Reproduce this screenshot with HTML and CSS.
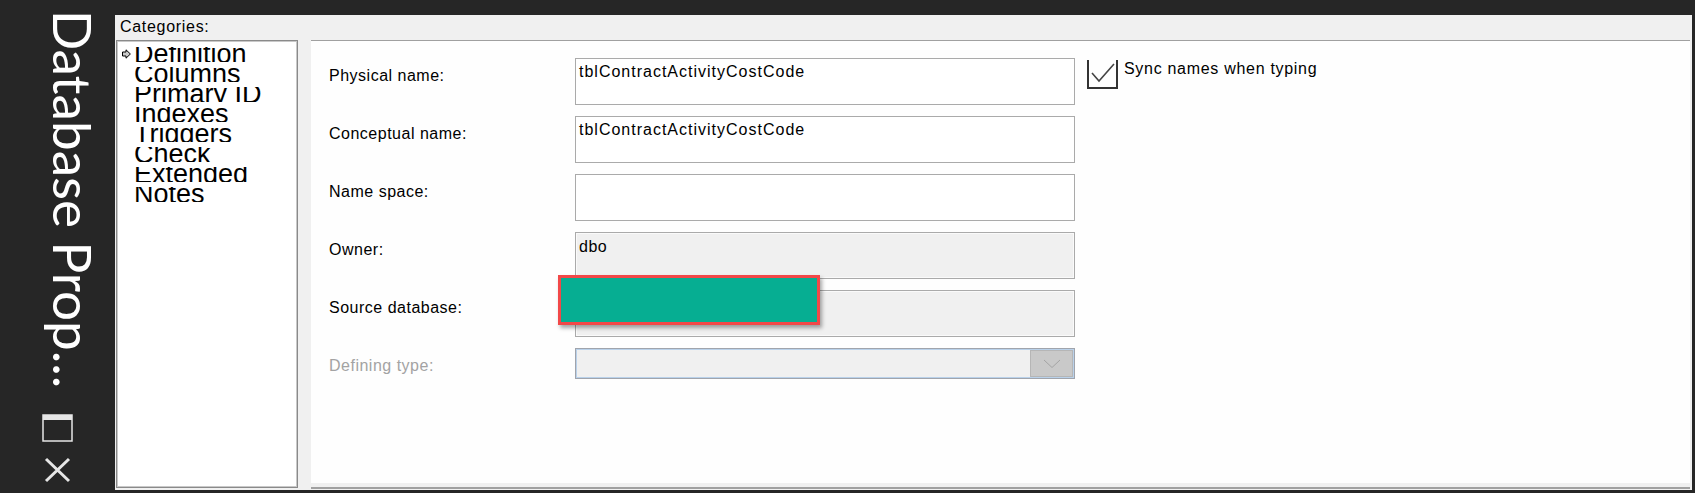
FILE: index.html
```html
<!DOCTYPE html>
<html lang="en">
<head>
    <meta charset="UTF-8">
    <meta name="viewport" content="width=device-width, initial-scale=1.0">
    <title>Database Properties</title>
    <link rel="stylesheet" href="styles.css">
</head>
<body>
    <div class="window">
        <!-- Docked title bar -->
        <div class="titlebar">
            <div class="title">Database Prop...</div>
            <div class="controls">
                <svg class="ctrl-max" width="31" height="28" viewBox="0 0 31 28">
                    <rect x="1" y="1" width="29" height="26" fill="none" stroke="#e6e6e6" stroke-width="1.5"/>
                    <rect x="1" y="1" width="29" height="5" fill="#e6e6e6"/>
                </svg>
                <svg class="ctrl-close" width="27" height="26" viewBox="0 0 27 26">
                    <path d="M2 2 L25 24 M25 2 L2 24" stroke="#e6e6e6" stroke-width="3" fill="none"/>
                </svg>
            </div>
        </div>

        <!-- Dialog -->
        <div class="dialog">
            <div class="cat-label">Categories:</div>
            <div class="dialog-body">
                <ul class="category-list">
                    <li><span class="marker">
                        <svg width="9" height="10" viewBox="0 0 9 10">
                            <path d="M0.5 3 H4 V0.8 L8.4 5 L4 9.2 V7 H0.5 Z" fill="#c8c8c8" stroke="#000" stroke-width="1"/>
                        </svg>
                    </span>Definition</li>
                    <li><span class="marker"></span>Columns</li>
                    <li><span class="marker"></span>Primary ID</li>
                    <li><span class="marker"></span>Indexes</li>
                    <li><span class="marker"></span>Triggers</li>
                    <li><span class="marker"></span>Check</li>
                    <li><span class="marker"></span>Extended</li>
                    <li><span class="marker"></span>Notes</li>
                </ul>

                <div class="form-wrap">
                    <div class="form-panel">
                        <div class="form-grid">
                            <div class="label">Physical name:</div>
                            <div class="field">tblContractActivityCostCode</div>
                            <div class="sync">
                                <span class="checkbox">
                                    <svg width="27" height="27" viewBox="0 0 27 27">
                                        <path d="M3 13 L10 21 L25 4" fill="none" stroke="#444" stroke-width="1.6"/>
                                    </svg>
                                </span>
                                <span class="sync-text">Sync names when typing</span>
                            </div>

                            <div class="label">Conceptual name:</div>
                            <div class="field">tblContractActivityCostCode</div>
                            <div></div>

                            <div class="label">Name space:</div>
                            <div class="field"></div>
                            <div></div>

                            <div class="label">Owner:</div>
                            <div class="field readonly">dbo</div>
                            <div></div>

                            <div class="label">Source database:</div>
                            <div class="field readonly"></div>
                            <div></div>

                            <div class="label disabled">Defining type:</div>
                            <div class="combo">
                                <span class="combo-value"></span>
                                <span class="combo-button">
                                    <svg width="18" height="10" viewBox="0 0 18 10">
                                        <path d="M1 1 L9 8.5 L17 1" fill="none" stroke="#a4a4a4" stroke-width="1"/>
                                    </svg>
                                </span>
                            </div>
                            <div></div>
                        </div>
                    </div>
                </div>
            </div>
        </div>

        <!-- Redaction box over the source database field -->
        <div class="redact"></div>
    </div>
</body>
</html>
```

FILE: styles.css
```css
* {
    box-sizing: border-box;
    margin: 0;
    padding: 0;
}

body {
    background-color: #262626;
    font-family: "Liberation Sans", Arial, sans-serif;
    overflow: hidden;
}

.window {
    position: relative;
    display: flex;
    width: 1695px;
    height: 493px;
    background-color: #262626;
}

/* Title bar */
.titlebar {
    width: 115px;
    flex-shrink: 0;
    display: flex;
    flex-direction: column;
    align-items: center;
}

.title {
    writing-mode: vertical-rl;
    font-family: Lato, "Open Sans", sans-serif;
    font-size: 53px;
    line-height: 60px;
    color: #ffffff;
    margin-top: 10px;
    margin-left: 30px;
    height: 390px;
    white-space: nowrap;
}

.controls {
    display: flex;
    flex-direction: column;
    align-items: center;
    gap: 15px;
    margin-top: 14px;
}

/* Dialog */
.dialog {
    width: 1577px;
    height: 475px;
    margin-top: 15px;
    background-color: #f0f0f0;
}

.cat-label {
    height: 25px;
    padding-left: 5px;
    font-size: 16px;
    letter-spacing: 0.7px;
    line-height: 24px;
    color: #000;
}

.dialog-body {
    display: flex;
    gap: 13px;
    padding-left: 1px;
}

.category-list {
    list-style: none;
    width: 182px;
    height: 448px;
    background-color: #ffffff;
    border: 1px solid #8a8a8a;
    box-shadow: inset 0 0 0 1px #c8c8c8;
    padding: 6px 0 0 5px;
}

.category-list li {
    display: flex;
    height: 15px;
    margin-bottom: 5px;
    overflow: hidden;
    font-size: 27px;
    line-height: 15px;
    color: #000;
}

.marker {
    width: 12px;
    flex-shrink: 0;
    display: flex;
    align-items: flex-start;
    padding-top: 2px;
}

.form-wrap {
    width: 1379px;
    height: 449px;
    padding-bottom: 4px;
    border-bottom: 2px solid #a0a0a0;
}

.form-panel {
    height: 100%;
    background-color: #fefefe;
    border-top: 1px solid #a0a0a0;
    padding: 17px 0 0 18px;
}

.form-grid {
    display: grid;
    grid-template-columns: 234px 500px auto;
    grid-auto-rows: 47px;
    column-gap: 12px;
    row-gap: 11px;
}

.form-grid > :nth-last-child(-n+3) {
    height: 31px;
}

.label {
    font-size: 16px;
    letter-spacing: 0.5px;
    line-height: 20px;
    padding-top: 8px;
    color: #000;
}

.label.disabled {
    color: #a3a3a3;
}

.field {
    border: 1px solid #aaaaaa;
    background-color: #ffffff;
    font-size: 16px;
    letter-spacing: 1px;
    line-height: 18px;
    padding: 4px 3px 0;
    color: #000;
}

.field.readonly {
    background-color: #f0f0f0;
    box-shadow: inset 0 0 0 1px #fafafa;
    padding-top: 5px;
    letter-spacing: 0.5px;
}

.combo {
    display: flex;
    border: 1px solid #a0a4ac;
    box-shadow: inset 0 0 0 1px #b9d1ea;
    background-color: #f0f0f0;
    padding: 1px;
}

.combo-value {
    flex: 1;
}

.combo-button {
    width: 43px;
    background-color: #c9c9c9;
    border: 1px solid #b6b6b6;
    display: flex;
    align-items: center;
    justify-content: center;
}

.sync {
    display: flex;
    align-items: flex-start;
    padding-top: 2px;
}

.checkbox {
    width: 31px;
    height: 29px;
    border: 2px solid #333;
    border-top: none;
    display: flex;
    align-items: center;
    justify-content: center;
}

.sync-text {
    margin-left: 6px;
    font-size: 16px;
    letter-spacing: 0.7px;
    line-height: 18px;
    color: #000;
}

/* Overlay */
.redact {
    position: absolute;
    left: 558px;
    top: 275px;
    width: 262px;
    height: 50px;
    background-color: #06ae92;
    border: 3px solid #f24848;
    box-shadow: 2px 3px 4px rgba(0, 0, 0, 0.35);
}
```
